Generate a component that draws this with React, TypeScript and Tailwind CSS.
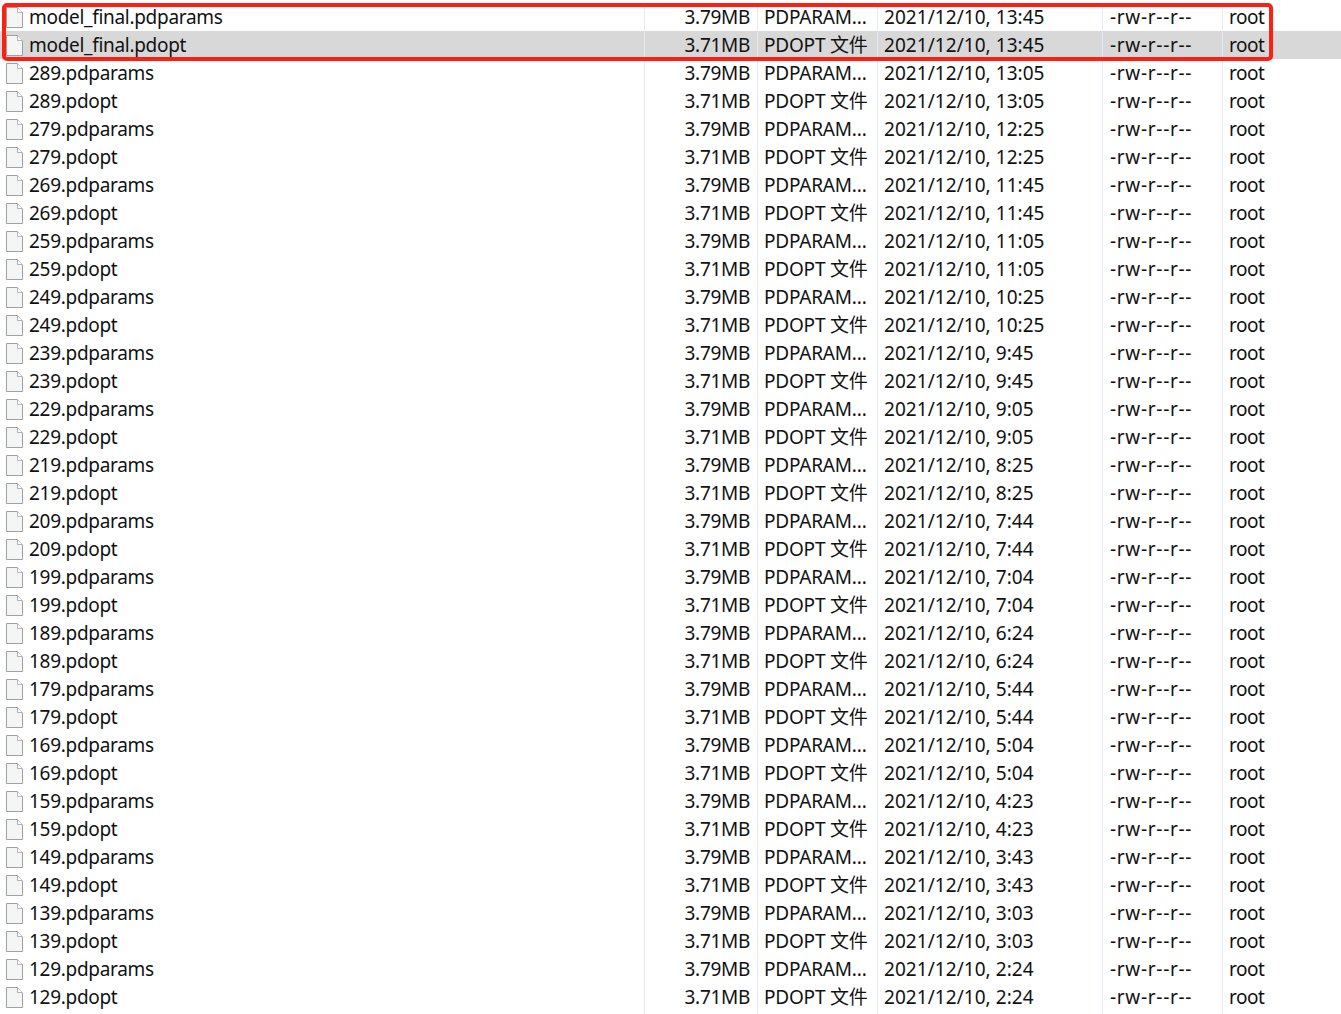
const FONT = "font-['Noto_Sans','Noto_Sans_CJK_SC',sans-serif]";

const rows: [string, string][] = [
  ["model_final", "13:45"],
  ["289", "13:05"],
  ["279", "12:25"],
  ["269", "11:45"],
  ["259", "11:05"],
  ["249", "10:25"],
  ["239", "9:45"],
  ["229", "9:05"],
  ["219", "8:25"],
  ["209", "7:44"],
  ["199", "7:04"],
  ["189", "6:24"],
  ["179", "5:44"],
  ["169", "5:04"],
  ["159", "4:23"],
  ["149", "3:43"],
  ["139", "3:03"],
  ["129", "2:24"],
];

function FileIcon() {
  return (
    <svg width="17" height="21" viewBox="0 0 17 21" className="shrink-0">
      <path d="M0.5 0.5H11.5L16.5 5.5V20.5H0.5Z" fill="#f4f5f5" stroke="#a0a0a0" />
      <path d="M11.5 0.5V5.5H16.5" fill="#ffffff" stroke="#b5b5b5" />
    </svg>
  );
}

function FileRow({ name, size, type, time, selected }: { name: string; size: string; type: string; time: string; selected?: boolean }) {
  return (
    <div className={`grid grid-cols-[645px_113px_120px_225px_120px_118px] h-7 items-center text-[19px] leading-7 text-[#111] whitespace-nowrap ${selected ? "bg-[#d8d8d8]" : ""}`}>
      <div className="flex h-7 items-center gap-[6px] pl-[6px] border-r border-[#e4ebf3]">
        <FileIcon />
        <span className="tracking-[-0.3px]">{name}</span>
      </div>
      <div className="h-7 pr-[7px] text-right tracking-[-0.3px] border-r border-[#e4ebf3]">{size}</div>
      <div className="h-7 pl-[6px] tracking-[-0.2px] border-r border-[#e4ebf3]">{type}</div>
      <div className="h-7 pl-[6px] tracking-[0.05px] border-r border-[#e4ebf3]">2021/12/10, {time}</div>
      <div className="h-7 pl-[7px] tracking-[0.7px] border-r border-[#e4ebf3]">-rw-r--r--</div>
      <div className="h-7 pl-[6px] tracking-[-0.5px]">root</div>
    </div>
  );
}

export default function App() {
  return (
    <div className={`relative w-[1341px] h-[1014px] overflow-hidden bg-white pt-[3px] ${FONT}`}>
      {rows.map(([id, time]) => (
        <div key={id}>
          <FileRow name={`${id}.pdparams`} size="3.79MB" type="PDPARAM..." time={time} />
          <FileRow name={`${id}.pdopt`} size="3.71MB" type="PDOPT 文件" time={time} selected={id === "model_final"} />
        </div>
      ))}
      {/* column lines carry on under the last row */}
      <div className="grid grid-cols-[645px_113px_120px_225px_120px_118px] h-[3px]">
        <div className="border-r border-[#e4ebf3]" />
        <div className="border-r border-[#e4ebf3]" />
        <div className="border-r border-[#e4ebf3]" />
        <div className="border-r border-[#e4ebf3]" />
        <div className="border-r border-[#e4ebf3]" />
      </div>
      {/* red annotation around the two final files */}
      <div className="absolute left-[2px] top-[3px] w-[1271px] h-[58px] border-[4px] border-[#fb2013] rounded-[5px]" />
    </div>
  );
}
